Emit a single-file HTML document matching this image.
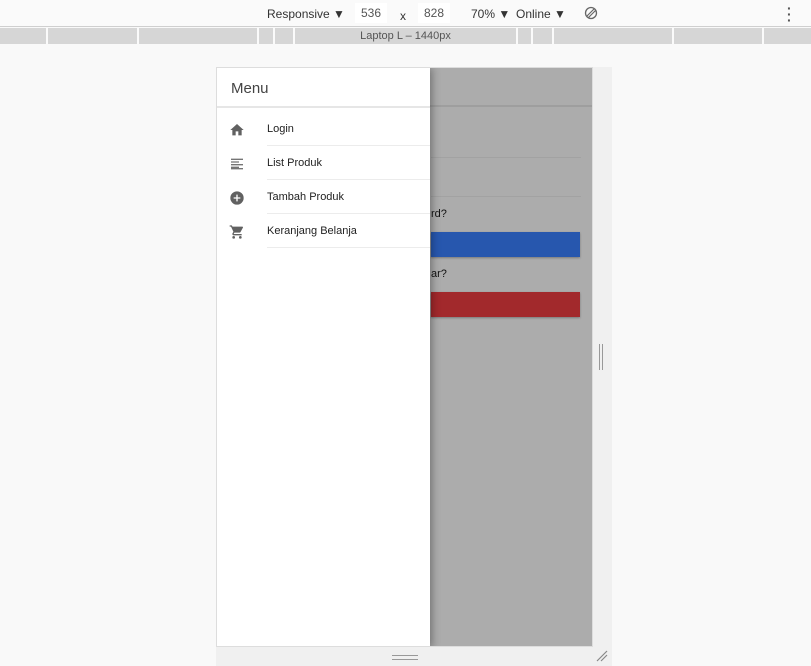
<!DOCTYPE html>
<html><head><style>
*{margin:0;padding:0;box-sizing:border-box}
body{width:811px;height:666px;background:#f9f9f9;font-family:"Liberation Sans",sans-serif;position:relative;overflow:hidden}
.tb{position:absolute;left:0;top:0;width:811px;height:27px;background:#fafafa;border-bottom:1px solid #cfcfcf;font-size:12px;color:#333}
.tb span{position:absolute;top:7px}
.inp{background:#fff;padding:0 6px;height:20px;top:3px!important;line-height:20px;color:#555}
.ruler{position:absolute;left:0;top:28px;width:811px;height:16px;background:#d6d6d6;font-size:11px;color:#555;text-align:center;line-height:17px}
.ruler i{position:absolute;top:0;width:2px;height:16px;background:#fafafa}
.gut{position:absolute;left:216px;top:67px;width:396px;height:599px;background:#f0f0f0}
.vp{position:absolute;left:216px;top:67px;width:377px;height:580px;background:#acacac;border:1px solid #ddd;overflow:hidden}
.hdr{position:absolute;left:0;top:0;width:376px;height:39px;border-bottom:2px solid #9e9e9e}
.line{position:absolute;left:214px;width:150px;height:1px;background:#a2a2a2}
.txt{position:absolute;left:214px;font-size:11px;color:#111}
.btn{position:absolute;left:214px;width:149px;height:25px;box-shadow:0 1px 2px rgba(0,0,0,.3)}
.dr{position:absolute;left:0;top:0;width:213px;height:580px;background:#fff;box-shadow:2px 0 8px rgba(0,0,0,.35)}
.dh{height:40px;border-bottom:2px solid #e6e6e6;font-size:15px;color:#444;padding:12px 0 0 14px}
.it{position:relative;height:34px;}
.it .l{position:absolute;left:50px;top:11px;font-size:11px;color:#222}
.it .b{position:absolute;left:50px;right:0;bottom:0;height:1px;background:#ececec}
.it svg{position:absolute;left:12px;top:10px}
</style></head><body>
<div class="tb">
<span style="left:267px">Responsive ▼</span>
<span class="inp" style="left:355px">536</span>
<span style="left:400px;top:9px">x</span>
<span class="inp" style="left:418px">828</span>
<span style="left:471px">70% ▼</span>
<span style="left:516px">Online ▼</span>
<svg style="position:absolute;left:584px;top:6px" width="14" height="14" viewBox="0 0 14 14"><circle cx="7" cy="7" r="5.5" fill="none" stroke="#666" stroke-width="1.3"/><path d="M3 10L10 3M4.5 11.5L11.5 4.5" stroke="#666" stroke-width="1.2"/></svg>
<span style="left:787px;top:5px;font-size:14px;font-weight:bold;line-height:6px;color:#555">·<br>·<br>·</span>
</div>
<div class="ruler">Laptop L – 1440px
<i style="left:46px"></i><i style="left:137px"></i><i style="left:257px"></i><i style="left:273px"></i><i style="left:293px"></i><i style="left:516px"></i><i style="left:531px"></i><i style="left:552px"></i><i style="left:672px"></i><i style="left:762px"></i></div>
<div class="gut"></div>
<div style="position:absolute;left:599px;top:344px;width:1px;height:26px;background:#999"></div>
<div style="position:absolute;left:602px;top:344px;width:1px;height:26px;background:#999"></div>
<div style="position:absolute;left:392px;top:655px;width:26px;height:1px;background:#999"></div>
<div style="position:absolute;left:392px;top:659px;width:26px;height:1px;background:#999"></div>
<svg style="position:absolute;left:596px;top:650px" width="12" height="12"><path d="M1 11L11 1M5 11L11 5" stroke="#888" stroke-width="1.2"/></svg>
<div class="vp">
<div class="hdr"></div>
<div class="line" style="top:89px"></div>
<div class="line" style="top:128px"></div>
<div class="txt" style="top:140px">rd?</div>
<div class="btn" style="top:164px;background:#2757ae"></div>
<div class="txt" style="top:200px">ar?</div>
<div class="btn" style="top:224px;background:#a2292c"></div>
<div class="dr">
<div class="dh">Menu</div>
<div style="height:4px"></div>
<div class="it"><svg width="16" height="16" viewBox="0 0 24 24"><path fill="#616161" d="M10 20v-6h4v6h5v-8h3L12 3 2 12h3v8z"/></svg><span class="l">Login</span><div class="b"></div></div>
<div class="it"><svg width="16" height="16" viewBox="0 0 24 24"><path fill="#757575" d="M3 4h18v2H3zM3 8h12v2H3zM3 12h18v2H3zM3 16h12v2H3zM3 20h18v-2H3z"/></svg><span class="l">List Produk</span><div class="b"></div></div>
<div class="it"><svg width="16" height="16" viewBox="0 0 24 24"><path fill="#616161" d="M12 2a10 10 0 100 20 10 10 0 000-20zm5 11h-4v4h-2v-4H7v-2h4V7h2v4h4z"/></svg><span class="l">Tambah Produk</span><div class="b"></div></div>
<div class="it"><svg width="16" height="16" viewBox="0 0 24 24"><path fill="#616161" d="M7 18a2 2 0 100 4 2 2 0 000-4zM1 2v2h2l3.6 7.6-1.4 2.4c-.1.3-.2.6-.2 1 0 1.1.9 2 2 2h12v-2H7.4a.25.25 0 01-.2-.4L8.1 13h7.5c.8 0 1.4-.4 1.7-1l3.6-6.5A1 1 0 0020 4H5.2l-.9-2zm16 16a2 2 0 100 4 2 2 0 000-4z"/></svg><span class="l">Keranjang Belanja</span><div class="b"></div></div>
</div>
</div>
</body></html>
